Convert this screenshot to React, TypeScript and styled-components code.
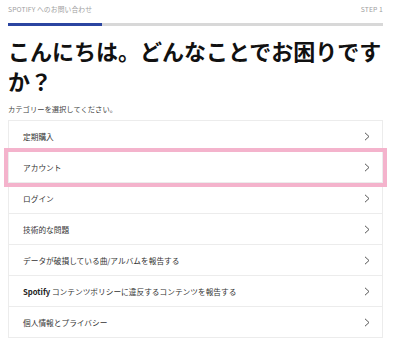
import React from 'react';
import styled, { createGlobalStyle } from 'styled-components';

const GlobalStyle = createGlobalStyle`
  html, body {
    margin: 0;
    padding: 0;
    background: #fff;
  }
  body {
    font-family: "Noto Sans CJK JP", "Noto Sans", sans-serif;
    color: #222;
  }
`;

const Page = styled.div`
  width: 375px;
  padding: 4px 0 0 8px;
`;

const TopBar = styled.div`
  display: flex;
  justify-content: space-between;
  align-items: center;
  height: 10px;
  font-size: 6.8px;
  color: #a0a0a0;
  letter-spacing: 0.1px;
`;

const Progress = styled.div`
  margin-top: 9px;
  height: 3px;
  background: #d8d8d8;
`;

const ProgressFill = styled.div`
  height: 100%;
  background: #2b45a1;
`;

const Title = styled.h1`
  margin: 9px 0 0;
  font-size: 22px;
  line-height: 30px;
  font-weight: 700;
  color: #111;
`;

const Subtitle = styled.p`
  margin: 9px 0 0;
  font-size: 7.3px;
  line-height: 10px;
  color: #444;
`;

const List = styled.ul`
  list-style: none;
  margin: 6px 0 0;
  padding: 0;
  border-top: 1px solid #ececec;
`;

const Row = styled.li<{ $active?: boolean }>`
  box-sizing: border-box;
  display: flex;
  align-items: center;
  justify-content: space-between;
  height: 31px;
  padding: 0 12px 0 14px;
  border: 1px solid #ececec;
  border-top: none;
  font-size: 7.7px;
  color: #333;
  outline: ${(p) => (p.$active ? '4px solid #f4b3cc' : 'none')};
  position: relative;
  z-index: ${(p) => (p.$active ? 1 : 0)};
`;

const Brand = styled.b`
  font-weight: 700;
  color: #222;
`;

const Chevron = () => (
  <svg width="6" height="9" viewBox="0 0 6 9">
    <polyline points="1,0.8 5,4.5 1,8.2" fill="none" stroke="#555" strokeWidth="1" />
  </svg>
);

const items: React.ReactNode[] = [
  '定期購入',
  'アカウント',
  'ログイン',
  '技術的な問題',
  'データが破損している曲/アルバムを報告する',
  <>
    <Brand>Spotify</Brand> コンテンツポリシーに違反するコンテンツを報告する
  </>,
  '個人情報とプライバシー',
];

const App: React.FC = () => {
  const step = 25;
  return (
    <>
      <GlobalStyle />
      <Page>
        <TopBar>
          <span>SPOTIFY へのお問い合わせ</span>
          <span>STEP 1</span>
        </TopBar>
        <Progress>
          <ProgressFill style={{ width: `${step}%` }} />
        </Progress>
        <Title>こんにちは。どんなことでお困りですか？</Title>
        <Subtitle>カテゴリーを選択してください。</Subtitle>
        <List>
          {items.map((item, i) => (
            <Row key={i} $active={i === 1}>
              <span>{item}</span>
              <Chevron />
            </Row>
          ))}
        </List>
      </Page>
    </>
  );
};

export default App;
